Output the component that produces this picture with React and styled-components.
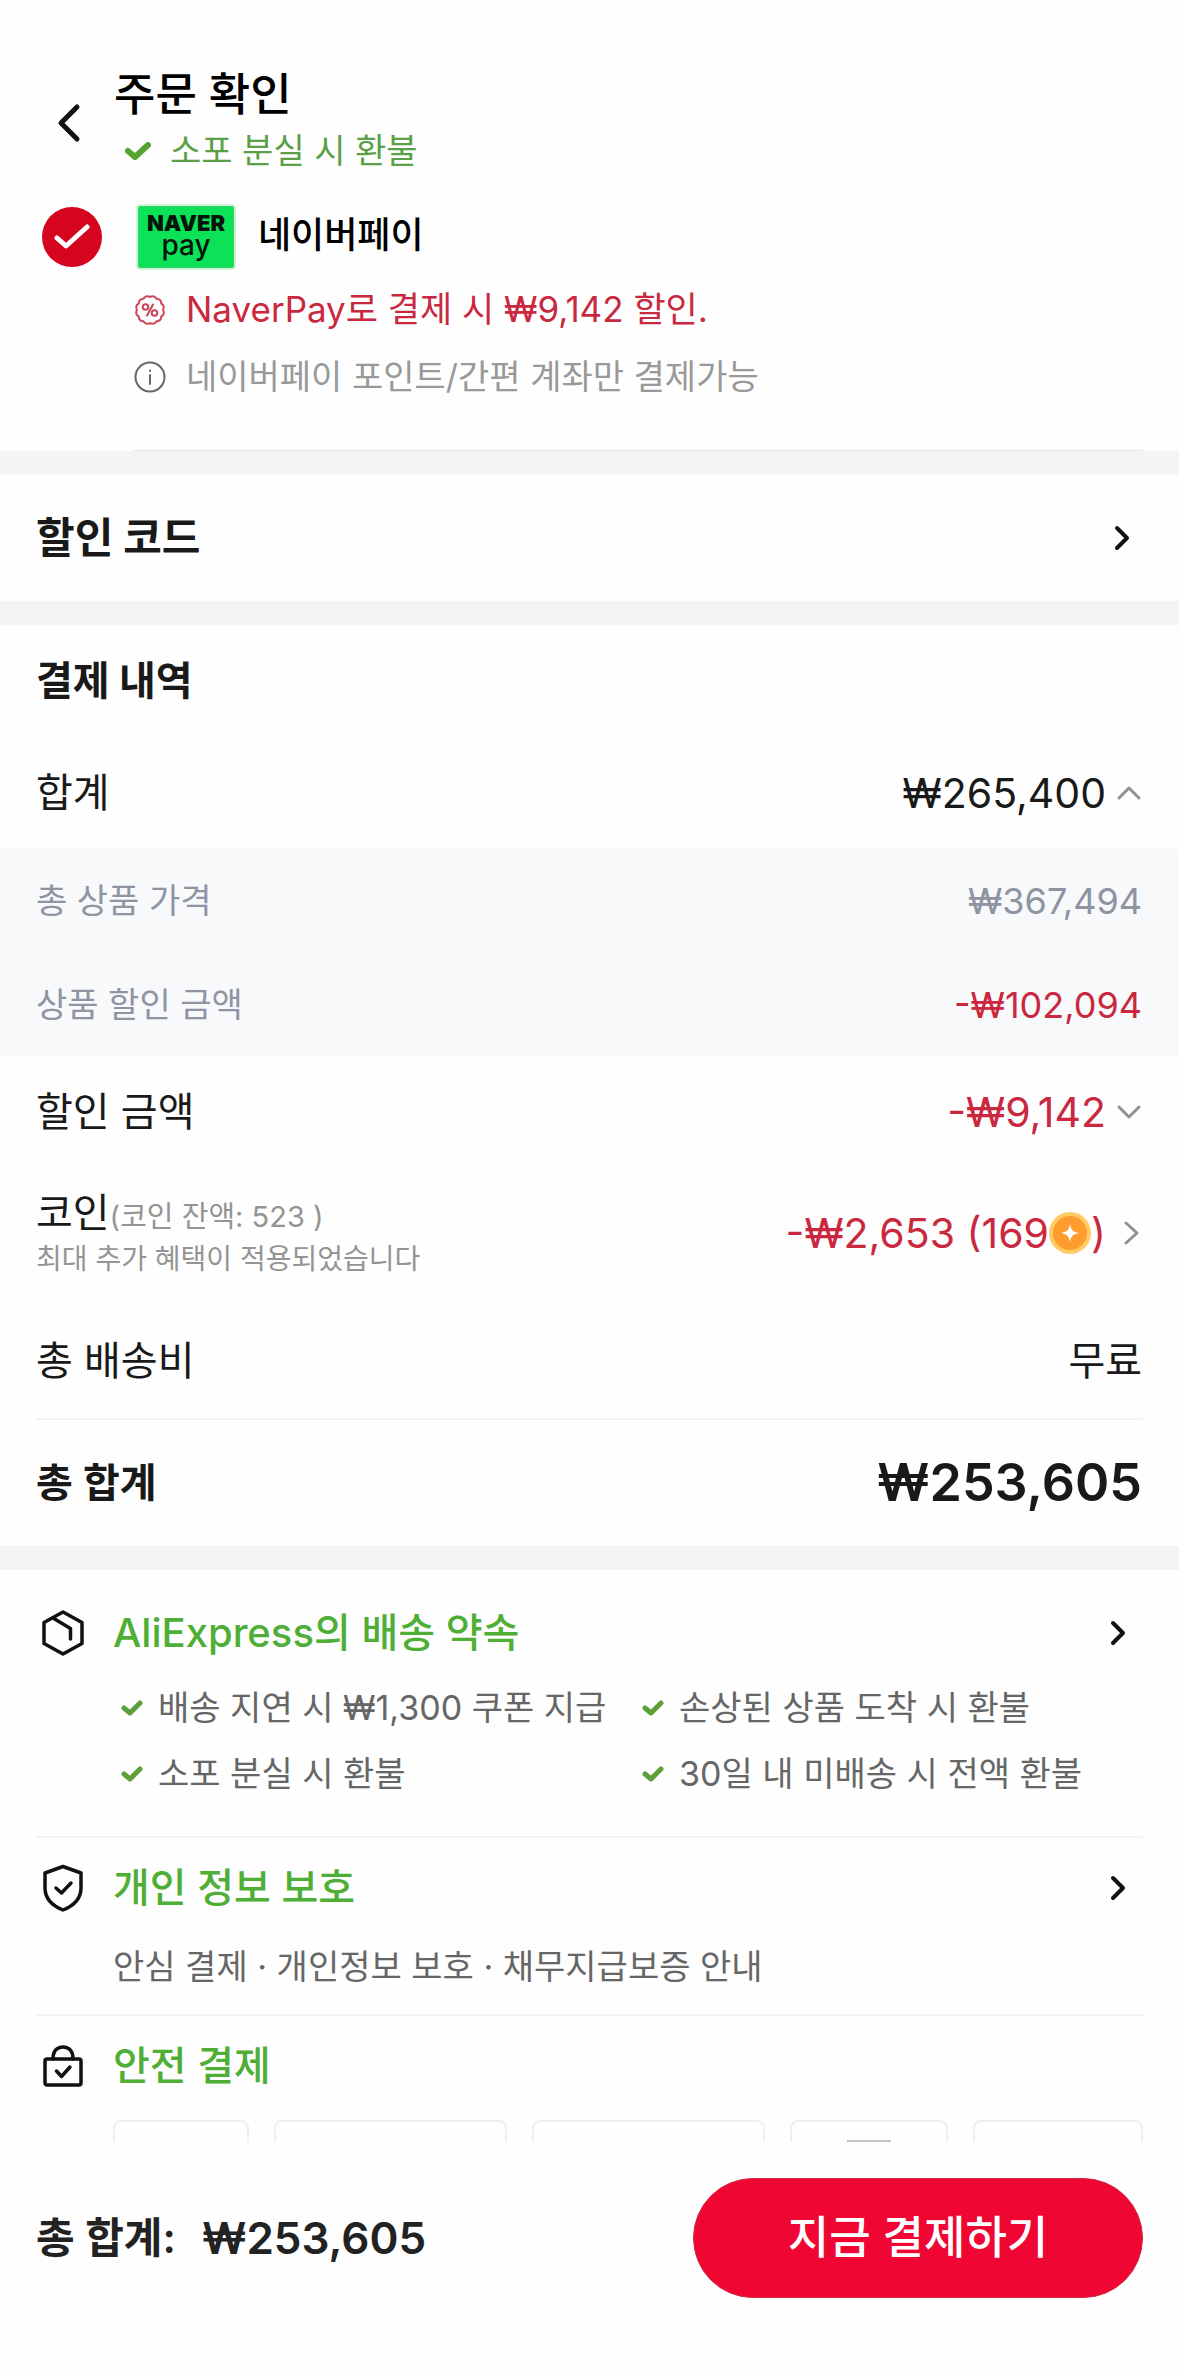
import React from "react";
import styled, { createGlobalStyle } from "styled-components";

const GlobalStyle = createGlobalStyle`
  *, *::before, *::after { box-sizing: border-box; }
  body {
    margin: 0;
    background: #fefefe;
    color: #191919;
    font-family: Inter, "Noto Sans CJK KR", sans-serif;
    line-height: 50px;
  }
  h1, h2, h3, p, ul, dl, dd { margin: 0; padding: 0; }
  ul { list-style: none; }
  button {
    border: 0;
    padding: 0;
    background: none;
    color: inherit;
    font: inherit;
    cursor: pointer;
  }
`;

const GREEN = "#4fae35";
const RED = "#c9283e";

const Screen = styled.div`
  display: flex;
  flex-direction: column;
  height: 100vh;
  white-space: nowrap;
`;

const Content = styled.main`
  flex: 1;
  min-height: 0;
  overflow: hidden auto;
  scrollbar-width: none;
`;

const Header = styled.header`
  display: flex;
  align-items: center;
  padding: 67px 36px 0;
`;

const BackButton = styled.button`
  display: flex;
  justify-content: center;
  width: 66px;
  margin-right: 12px;
`;

const Title = styled.h1`
  font-size: 45px;
  line-height: 56px;
  font-weight: 500;
  color: #000;
`;

const Assurance = styled.p`
  display: flex;
  align-items: center;
  gap: 19px;
  padding-left: 11px;
  font-size: 34px;
  line-height: 56px;
  color: #5aa046;
`;

const Icon = styled.svg`
  flex: none;
  display: block;
  fill: none;
  stroke: ${(p) => p.$color || "#111"};
  stroke-width: ${(p) => p.$stroke || 4};
  stroke-linecap: round;
  stroke-linejoin: round;
`;

const Payment = styled.section`
  padding: 26px 36px 0 42px;
`;

const Method = styled.label`
  display: flex;
  align-items: center;
  height: 64px;
  cursor: pointer;
`;

const RadioBox = styled.span`
  display: grid;
  place-items: center;
  margin-right: 36px;
  > * { grid-area: 1 / 1; }
  svg { pointer-events: none; }
`;

const Radio = styled.input`
  appearance: none;
  width: 60px;
  height: 60px;
  margin: 0;
  border-radius: 50%;
  background: #d5041f;
`;

const NaverBadge = styled.span`
  display: flex;
  flex-direction: column;
  align-items: center;
  width: 96px;
  height: 62px;
  margin-right: 24px;
  padding-top: 6px;
  border: 1px solid #3fce68;
  border-radius: 2px;
  background: #0be257;
  box-shadow: 0 0 0 2px #c8f7d6;
  color: #04140a;
`;

const NaverName = styled.span`
  font-size: 22px;
  line-height: 20px;
  font-weight: 900;
`;

const NaverPay = styled.span`
  font-size: 28px;
  line-height: 24px;
  font-weight: 500;
`;

const MethodName = styled.span`
  padding-bottom: 4px;
  font-size: 36px;
  font-weight: 500;
  color: #000;
`;

const MethodNotes = styled.ul`
  margin-left: 92px;
  padding: 7px 0 40px;
  border-bottom: 1px solid #e6e6e6;
`;

const Note = styled.li`
  display: flex;
  align-items: center;
  gap: 20px;
  font-size: ${(p) => p.$size}px;
  line-height: 67px;
  color: ${(p) => p.$color};
`;

const Band = styled.div`
  height: 24px;
  background: #f4f4f4;
`;

const CouponButton = styled.button`
  display: flex;
  align-items: center;
  justify-content: space-between;
  width: 100%;
  height: 126px;
  padding: 0 49px 0 36px;
  font-size: 42px;
  font-weight: 700;
`;

const SummaryTitle = styled.h2`
  padding: 31px 36px;
  font-size: 40px;
  font-weight: 700;
`;

const Row = styled.div`
  display: flex;
  align-items: center;
  justify-content: space-between;
  height: ${(p) => p.$height || 112}px;
  padding: 0 37px 0 36px;
  font-size: 40px;
`;

const Breakdown = styled.div`
  background: #f8f9fb;
  color: #8f94a2;
`;

const DetailRow = styled(Row)`
  height: 104px;
  font-size: 34px;
  dd { font-size: 36px; }
`;

const Amount = styled.dd`
  color: ${(p) => (p.$discount ? RED : "inherit")};
`;

const AmountButton = styled.button`
  display: flex;
  align-items: center;
  gap: 10px;
  font-size: 41px;
`;

const CoinRow = styled(Row)`
  height: 136px;
  padding-bottom: 4px;
`;

const CoinAmount = styled.span`
  display: flex;
  align-items: center;
`;

const CoinLabel = styled.dt`
  padding-top: 5px;
  line-height: 42px;
`;

const CoinNote = styled.span`
  display: ${(p) => (p.$block ? "block" : "inline")};
  font-size: ${(p) => (p.$block ? 28 : 29)}px;
  color: #949494;
`;

const Rule = styled.hr`
  height: 2px;
  margin: 0 36px;
  border: 0;
  background: #f3f3f3;
`;

const TotalRow = styled(Row)`
  height: 126px;
  font-weight: 600;
`;

const TotalAmount = styled.dd`
  font-size: 52px;
`;

const Guarantee = styled.section`
  padding: ${(p) => p.$top || 26}px 36px ${(p) => p.$bottom || 0}px;
`;

const GuaranteeHead = styled.div`
  display: flex;
  align-items: center;
  height: 48px;
  padding-right: 17px;
`;

const IconSlot = styled.span`
  display: flex;
  justify-content: center;
  width: 54px;
  margin-right: 23px;
`;

const GuaranteeTitle = styled.h3`
  flex: 1;
  font-size: 40px;
  font-weight: 500;
  color: ${GREEN};
`;

const Promises = styled.ul`
  display: grid;
  grid-template-columns: 1fr 1fr;
  column-gap: 20px;
  padding: 18px 0 0 85px;
`;

const PromiseItem = styled.li`
  display: flex;
  align-items: center;
  gap: 15px;
  font-size: 34px;
  line-height: 66px;
  color: #666;
`;

const Description = styled.p`
  padding: 30px 0 0 77px;
  font-size: 34px;
  color: #666;
`;

const Cards = styled.ul`
  display: flex;
  gap: 25px;
  padding: 30px 0 24px 77px;
`;

const Card = styled.li`
  display: flex;
  justify-content: center;
  flex: ${(p) => p.$grow} 1 0;
  height: 84px;
  padding-top: 18px;
  border: 2px solid #efefef;
  border-radius: 8px;
`;

const CardMark = styled.span`
  width: 44px;
  height: 44px;
  background: #c4c4c4;
`;

const Footer = styled.footer`
  display: flex;
  align-items: flex-start;
  justify-content: space-between;
  height: 233px;
  padding: 36px 36px 0;
  background: #fefefe;
`;

const FooterTotal = styled.p`
  display: flex;
  gap: 26px;
  font-size: 42px;
  line-height: 120px;
  font-weight: 600;
  color: #222;
`;

const FooterPrice = styled.strong`
  font-size: 44px;
  font-weight: 600;
`;

const PayButton = styled.button`
  width: 450px;
  height: 120px;
  border: 1px solid #d12842;
  border-radius: 60px;
  background: #f00633;
  color: #fff;
  font-size: 45px;
  font-weight: 500;
`;

const BigCheck = () => (
  <Icon width="26" height="18" viewBox="0 0 26 18" $color="#57a332" $stroke={6} aria-hidden="true">
    <path d="M3 9l7 6L23 3" />
  </Icon>
);

const SmallCheck = () => (
  <Icon width="22" height="16" viewBox="0 0 22 16" $color="#5d9f38" $stroke={5} aria-hidden="true">
    <path d="M3 8l6 5L19 3" />
  </Icon>
);

const ArrowRight = () => (
  <Icon width="16" height="26" viewBox="0 0 16 26" $stroke={4} aria-hidden="true">
    <path d="M3 3l10 10L3 23" />
  </Icon>
);

const ArrowVertical = ({ up }) => (
  <Icon width="26" height="16" viewBox="0 0 26 16" $color="#8f9197" $stroke={3} aria-hidden="true">
    <path d={up ? "M3 13L13 3l10 10" : "M3 3l10 10L23 3"} />
  </Icon>
);

// Scalloped outline of the discount seal, twelve bumps round the rim.
const sealPath = (() => {
  const points = Array.from({ length: 12 }, (_, i) => {
    const angle = (i * Math.PI) / 6;
    return [16 + 13 * Math.cos(angle), 16 + 13 * Math.sin(angle)].map((n) => n.toFixed(2));
  });
  const arcs = points.slice(1).concat([points[0]]).map(([x, y]) => `A4.4 4.4 0 0 1 ${x} ${y}`);
  return `M${points[0].join(" ")}${arcs.join("")}Z`;
})();

const DiscountSeal = () => (
  <Icon width="32" height="32" viewBox="0 0 32 32" $color="#cb4556" $stroke={2} aria-hidden="true">
    <path d={sealPath} />
    <circle cx="11.5" cy="13" r="2.8" />
    <circle cx="20.5" cy="19" r="2.8" />
    <path d="M19 10.5l-6 11" />
  </Icon>
);

const InfoIcon = () => (
  <Icon width="32" height="32" viewBox="0 0 32 32" $color="#666" $stroke={2} aria-hidden="true">
    <circle cx="16" cy="16" r="14.5" />
    <path d="M16 14v9M16 9.5v.5" />
  </Icon>
);

const Coin = () => (
  <Icon width="42" height="42" viewBox="0 0 42 42" role="img" aria-label="코인">
    <circle cx="21" cy="21" r="21" fill="#ffcb66" stroke="none" />
    <circle cx="21" cy="21" r="17" fill="#ff9c2e" stroke="none" />
    <path
      d="M21 12C22 18 24 20 30 21C24 22 22 24 21 30C20 24 18 22 12 21C18 20 20 18 21 12Z"
      fill="#fff"
      stroke="none"
    />
  </Icon>
);

const BoxIcon = () => (
  <Icon width="44" height="46" viewBox="0 0 44 46" $stroke={3.5} aria-hidden="true">
    <path d="M22 2L41 12.5v21L22 44L3 33.5v-21z" />
    <path d="M12 8L29.5 18.500V29" />
  </Icon>
);

const ShieldIcon = () => (
  <Icon width="40" height="48" viewBox="0 0 40 48" $stroke={3.5} aria-hidden="true">
    <path d="M20 2.5L38 9V24C38 35 30 42 20 46C10 42 2 35 2 24V9z" />
    <path d="M13 24l5.5 5L28 19" />
  </Icon>
);

const LockIcon = () => (
  <Icon width="40" height="42" viewBox="0 0 40 42" $stroke={3.5} aria-hidden="true">
    <rect x="2" y="14" width="36" height="26" rx="2" />
    <path d="M10 14C10 6 14 2 20 2s10 4 10 12" />
    <path d="M13.5 26l5 5.5L27 22" />
  </Icon>
);

const promises = [
  "배송 지연 시 ₩1,300 쿠폰 지급",
  "손상된 상품 도착 시 환불",
  "소포 분실 시 환불",
  "30일 내 미배송 시 전액 환불",
];

const cards = [
  { grow: 135 },
  { grow: 234 },
  { grow: 233 },
  { grow: 158, mark: true },
  { grow: 169 },
];

export default function App() {
  return (
    <Screen>
      <GlobalStyle />
      <Content>
        <Header>
          <BackButton aria-label="뒤로">
            <Icon width="24" height="40" viewBox="0 0 24 40" $stroke={5} aria-hidden="true">
              <path d="M20 4L4 20l16 16" />
            </Icon>
          </BackButton>
          <div>
            <Title>주문 확인</Title>
            <Assurance>
              <BigCheck />
              소포 분실 시 환불
            </Assurance>
          </div>
        </Header>

        <Payment>
          <Method>
            <RadioBox>
              <Radio type="radio" name="method" defaultChecked />
              <Icon width="36" height="26" viewBox="0 0 36 26" $color="#fff" $stroke={5} aria-hidden="true">
                <path d="M3 14l9 8L33 3" />
              </Icon>
            </RadioBox>
            <NaverBadge>
              <NaverName>NAVER</NaverName>
              <NaverPay>pay</NaverPay>
            </NaverBadge>
            <MethodName>네이버페이</MethodName>
          </Method>
          <MethodNotes>
            <Note $color={RED} $size={35}>
              <DiscountSeal />
              NaverPay로 결제 시 ₩9,142 할인.
            </Note>
            <Note $color="#999" $size={34}>
              <InfoIcon />
              네이버페이 포인트/간편 계좌만 결제가능
            </Note>
          </MethodNotes>
        </Payment>
        <Band />

        <CouponButton>
          할인 코드
          <ArrowRight />
        </CouponButton>
        <Band />

        <section>
          <SummaryTitle>결제 내역</SummaryTitle>
          <dl>
            <Row>
              <dt>합계</dt>
              <Amount>
                <AmountButton aria-expanded="true">
                  ₩265,400
                  <ArrowVertical up />
                </AmountButton>
              </Amount>
            </Row>
            <Breakdown>
              <DetailRow>
                <dt>총 상품 가격</dt>
                <Amount>₩367,494</Amount>
              </DetailRow>
              <DetailRow>
                <dt>상품 할인 금액</dt>
                <Amount $discount>-₩102,094</Amount>
              </DetailRow>
            </Breakdown>
            <Row $height={110}>
              <dt>할인 금액</dt>
              <Amount $discount>
                <AmountButton aria-expanded="false">
                  -₩9,142
                  <ArrowVertical />
                </AmountButton>
              </Amount>
            </Row>
            <CoinRow>
              <CoinLabel>
                코인<CoinNote>(코인 잔액: 523 )</CoinNote>
                <CoinNote $block>최대 추가 혜택이 적용되었습니다</CoinNote>
              </CoinLabel>
              <Amount $discount>
                <AmountButton>
                  <CoinAmount>
                    -₩2,653 (169
                    <Coin />)
                  </CoinAmount>
                  <Icon width="26" height="26" viewBox="0 0 26 26" $color="#8f9197" $stroke={3} aria-hidden="true">
                    <path d="M10 3l11 10-11 10" />
                  </Icon>
                </AmountButton>
              </Amount>
            </CoinRow>
            <Row $height={115}>
              <dt>총 배송비</dt>
              <Amount>무료</Amount>
            </Row>
            <Rule />
            <TotalRow>
              <dt>총 합계</dt>
              <TotalAmount>₩253,605</TotalAmount>
            </TotalRow>
          </dl>
        </section>
        <Band />

        <Guarantee $top={39} $bottom={29}>
          <GuaranteeHead>
            <IconSlot><BoxIcon /></IconSlot>
            <GuaranteeTitle>AliExpress의 배송 약속</GuaranteeTitle>
            <button aria-label="배송 약속 보기"><ArrowRight /></button>
          </GuaranteeHead>
          <Promises>
            {promises.map((text) => (
              <PromiseItem key={text}>
                <SmallCheck />
                {text}
              </PromiseItem>
            ))}
          </Promises>
        </Guarantee>
        <Rule />
        <Guarantee $bottom={22}>
          <GuaranteeHead>
            <IconSlot><ShieldIcon /></IconSlot>
            <GuaranteeTitle>개인 정보 보호</GuaranteeTitle>
            <button aria-label="개인 정보 보호 보기"><ArrowRight /></button>
          </GuaranteeHead>
          <Description>안심 결제 · 개인정보 보호 · 채무지급보증 안내</Description>
        </Guarantee>
        <Rule />
        <Guarantee>
          <GuaranteeHead>
            <IconSlot><LockIcon /></IconSlot>
            <GuaranteeTitle>안전 결제</GuaranteeTitle>
          </GuaranteeHead>
          <Cards>
            {cards.map(({ grow, mark }, i) => (
              <Card key={i} $grow={grow}>{mark && <CardMark />}</Card>
            ))}
          </Cards>
        </Guarantee>
      </Content>

      <Footer>
        <FooterTotal>
          총 합계: <FooterPrice>₩253,605</FooterPrice>
        </FooterTotal>
        <PayButton>지금 결제하기</PayButton>
      </Footer>
    </Screen>
  );
}
